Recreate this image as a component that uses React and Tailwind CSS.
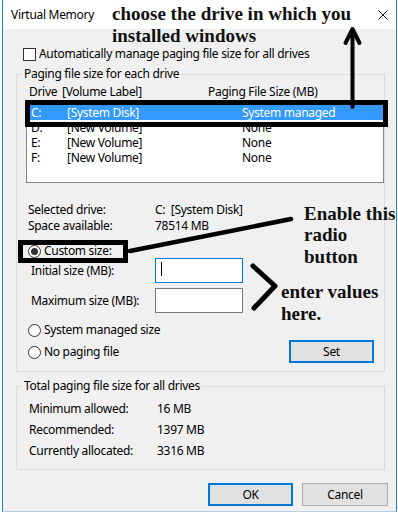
import React from "react";

const ui = { fontFamily: '"Noto Sans", "Liberation Sans", sans-serif' };
const note = { fontFamily: '"Liberation Serif", "Times New Roman", serif' };

const drives = [
  { letter: "C:", label: "[System Disk]", size: "System managed" },
  { letter: "D:", label: "[New Volume]", size: "None" },
  { letter: "E:", label: "[New Volume]", size: "None" },
  { letter: "F:", label: "[New Volume]", size: "None" },
];

function Radio({ checked, label }) {
  return (
    <div className="flex h-[16px] items-center gap-[3px]">
      <span className="flex h-[13px] w-[13px] items-center justify-center rounded-full border border-[#333] bg-white">
        {checked && <span className="h-[7px] w-[7px] rounded-full bg-[#333]" />}
      </span>
      <span>{label}</span>
    </div>
  );
}

function Annotations() {
  return (
    <div className="pointer-events-none absolute inset-0 tracking-normal">
      <svg width="398" height="522" className="absolute left-0 top-0">
        <g stroke="#000" fill="none">
          <line x1="352.5" y1="31" x2="352.5" y2="107" strokeWidth="4" strokeLinecap="round" />
          <polyline points="345.5,43 352.5,29 359.5,43" strokeWidth="4" strokeLinecap="round" strokeLinejoin="round" />
          <rect x="27.5" y="102.5" width="358" height="22" strokeWidth="5" />
          <rect x="20.5" y="242.5" width="105" height="18" strokeWidth="5" />
          <line x1="130" y1="251" x2="291" y2="219" strokeWidth="4.5" strokeLinecap="round" />
          <polyline points="253,266 275,286 254,308" strokeWidth="5" strokeLinecap="round" strokeLinejoin="round" />
        </g>
      </svg>
      <div style={note} className="absolute left-[112px] top-[2.5px] text-[19px] font-bold leading-[22px] text-[#111]">
        choose the drive in which you
        <br />
        installed windows
      </div>
      <div style={note} className="absolute left-[304px] top-[202.5px] text-[19px] font-bold leading-[21.5px] text-[#111]">
        Enable this
        <br />
        radio
        <br />
        button
      </div>
      <div style={note} className="absolute left-[281px] top-[280.5px] text-[19px] font-bold leading-[22px] text-[#111]">
        enter values
        <br />
        here.
      </div>
    </div>
  );
}

export default function App() {
  return (
    <div style={ui} className="relative h-[522px] w-[398px] overflow-hidden bg-white pl-[2px] text-[12px] tracking-[-0.3px] text-black">
      <div className="flex h-[512px] w-[395px] flex-col border-x border-b border-x-[#1883d7] border-b-[#b9cde3]">
        {/* title bar */}
        <div className="flex h-[29px] items-center justify-between bg-white pl-[8px] pr-[8px]">
          <span>Virtual Memory</span>
          <svg width="10" height="10" viewBox="0 0 10 10">
            <path d="M0.5 0.5 L9.5 9.5 M9.5 0.5 L0.5 9.5" stroke="#111" strokeWidth="1" />
          </svg>
        </div>

        <div className="flex flex-1 flex-col bg-[#f0f0f0]">
          <div className="mt-[17px] flex h-[16px] items-center gap-[3px] pl-[20px]">
            <span className="h-[13px] w-[13px] border border-[#333] bg-white" />
            <span>Automatically manage paging file size for all drives</span>
          </div>

          <fieldset className="ml-[13px] mt-[4px] w-[369px] border border-[#dcdcdc] pb-[8px]">
            <legend className="ml-[5px] px-[2px] leading-[16px]">Paging file size for each drive</legend>
            <div className="mt-[2px] flex h-[16px] items-center pl-[12px]">
              <span className="w-[33px]">Drive</span>
              <span className="w-[146px]">[Volume Label]</span>
              <span>Paging File Size (MB)</span>
            </div>
            <div className="ml-[9px] h-[83px] border border-[#828790] bg-white pt-[4px]">
              {drives.map((d, i) => (
                <div
                  key={d.letter}
                  className={`ml-[3px] flex h-[15px] items-center pl-[1px] leading-[15px] ${i === 0 ? "bg-[#3399ff] text-white" : ""}`}
                >
                  <span className="w-[36px]">{d.letter}</span>
                  <span className="w-[175px]">{d.label}</span>
                  <span>{d.size}</span>
                </div>
              ))}
            </div>

            <div className="mt-[19px] pl-[11px]">
              <div className="flex h-[16px] items-center">
                <span className="w-[127px]">Selected drive:</span>
                <span>C:&nbsp;&nbsp;[System Disk]</span>
              </div>
              <div className="flex h-[16px] items-center">
                <span className="w-[127px]">Space available:</span>
                <span>78514 MB</span>
              </div>
            </div>

            <div className="mt-[9px] pl-[11px]">
              <Radio checked label="Custom size:" />
            </div>

            <div className="-mt-[1px] flex flex-col gap-[5px] pl-[14px]">
              <div className="flex h-[25px] items-center">
                <span className="w-[124px]">Initial size (MB):</span>
                <div className="relative h-[25px] w-[88px] border border-[#0078d7] bg-white">
                  <span className="absolute left-[5px] top-[3px] h-[14px] w-px bg-black" />
                </div>
              </div>
              <div className="flex h-[25px] items-center">
                <span className="w-[124px]">Maximum size (MB):</span>
                <div className="h-[25px] w-[88px] border border-[#7a7a7a] bg-white" />
              </div>
            </div>

            <div className="mt-[9px] flex items-start justify-between pl-[11px] pr-[10px]">
              <div className="flex flex-col gap-[6px]">
                <Radio label="System managed size" />
                <Radio label="No paging file" />
              </div>
              <button className="mt-[18px] flex h-[23px] w-[85px] items-center justify-center border-2 border-[#0078d7] bg-[#e1e1e1]">
                Set
              </button>
            </div>
          </fieldset>

          <fieldset className="ml-[13px] mt-[6px] w-[369px] border border-[#dcdcdc] pb-[8px]">
            <legend className="ml-[5px] px-[2px] leading-[16px]">Total paging file size for all drives</legend>
            <div className="mt-[4px] pl-[12px] leading-[21px]">
              <div className="flex">
                <span className="w-[128px]">Minimum allowed:</span>
                <span>16 MB</span>
              </div>
              <div className="flex">
                <span className="w-[128px]">Recommended:</span>
                <span>1397 MB</span>
              </div>
              <div className="flex">
                <span className="w-[128px]">Currently allocated:</span>
                <span>3316 MB</span>
              </div>
            </div>
          </fieldset>

          <div className="mt-[13px] flex justify-end gap-[9px] pr-[8px]">
            <button className="flex h-[23px] w-[85px] items-center justify-center border-2 border-[#0078d7] bg-[#e1e1e1]">
              OK
            </button>
            <button className="flex h-[23px] w-[86px] items-center justify-center border border-[#adadad] bg-[#e1e1e1]">
              Cancel
            </button>
          </div>
        </div>
      </div>
      <Annotations />
    </div>
  );
}
